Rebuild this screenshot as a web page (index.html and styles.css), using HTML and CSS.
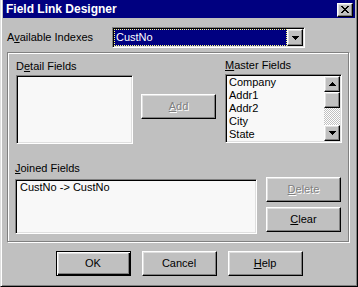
FILE: index.html
```html
<!DOCTYPE html>
<html lang="en">
<head>
    <meta charset="UTF-8">
    <meta name="viewport" content="width=device-width, initial-scale=1.0">
    <title>Field Link Designer</title>
    <link rel="stylesheet" href="styles.css">
</head>
<body>
    <div class="window">
        <div class="caption">
            <span class="caption-title">Field Link Designer</span>
            <span class="btn close-btn">
                <svg width="8" height="7" viewBox="0 0 8 7" shape-rendering="crispEdges"><path d="M0 0h2v1H0zM6 0h2v1H6zM1 1h2v1H1zM5 1h2v1H5zM2 2h4v1H2zM3 3h2v1H3zM2 4h4v1H2zM1 5h2v1H1zM5 5h2v1H5zM0 6h2v1H0zM6 6h2v1H6z"/></svg>
            </span>
        </div>
        <div class="dialog">
            <div class="index-row">
                <span class="index-label">A<u>v</u>ailable Indexes</span>
                <div class="combo">
                    <div class="combo-value">CustNo</div>
                    <div class="btn combo-arrow">
                        <svg width="7" height="4" viewBox="0 0 7 4" shape-rendering="crispEdges"><path d="M0 0h7v1H0zM1 1h5v1H1zM2 2h3v1H2zM3 3h1v1H3z"/></svg>
                    </div>
                </div>
            </div>

            <div class="group">
                <div class="group-top">
                    <div class="field-col">
                        <div class="field-label">D<u>e</u>tail Fields</div>
                        <div class="listbox detail-list"></div>
                    </div>
                    <div class="btn push disabled add-btn"><span><u>A</u>dd</span></div>
                    <div class="field-col master-col">
                        <div class="field-label"><u>M</u>aster Fields</div>
                        <div class="listbox master-list">
                            <div class="items">
                                <div>Company</div>
                                <div>Addr1</div>
                                <div>Addr2</div>
                                <div>City</div>
                                <div>State</div>
                            </div>
                            <div class="scrollbar">
                                <div class="btn scroll-btn">
                                    <svg width="7" height="4" viewBox="0 0 7 4" shape-rendering="crispEdges"><path d="M3 0h1v1H3zM2 1h3v1H2zM1 2h5v1H1zM0 3h7v1H0z"/></svg>
                                </div>
                                <div class="btn scroll-thumb"></div>
                                <div class="scroll-track"></div>
                                <div class="btn scroll-btn">
                                    <svg width="7" height="4" viewBox="0 0 7 4" shape-rendering="crispEdges"><path d="M0 0h7v1H0zM1 1h5v1H1zM2 2h3v1H2zM3 3h1v1H3z"/></svg>
                                </div>
                            </div>
                        </div>
                    </div>
                </div>

                <div class="group-bottom">
                    <div class="joined-col">
                        <div class="field-label joined-label"><u>J</u>oined Fields</div>
                        <div class="listbox joined-list">
                            <div class="items">
                                <div>CustNo -&gt; CustNo</div>
                            </div>
                        </div>
                    </div>
                    <div class="side-btns">
                        <div class="btn push disabled"><span><u>D</u>elete</span></div>
                        <div class="btn push"><span><u>C</u>lear</span></div>
                    </div>
                </div>
            </div>

            <div class="footer">
                <div class="btn push default-btn">OK</div>
                <div class="btn push">Cancel</div>
                <div class="btn push"><span><u>H</u>elp</span></div>
            </div>
        </div>
    </div>
</body>
</html>
```

FILE: styles.css
```css
body {
    margin: 0;
    background: #c0c0c0;
    font-family: "Liberation Sans", Arial, sans-serif;
    font-size: 11px;
    line-height: 13px;
    color: #000;
}
u {
    text-underline-offset: 1px;
}
.window {
    width: 358px;
    height: 287px;
    box-sizing: border-box;
    border-left: 1px solid #dfdfdf;
    border-right: 1px solid #000;
    border-bottom: 1px solid #000;
    box-shadow: inset 1px 0 #fff, inset -1px -1px #808080;
    padding: 0 2px 2px 2px;
    background: #c0c0c0;
}
.caption {
    display: flex;
    align-items: flex-start;
    height: 18px;
    background: #000080;
    color: #fff;
}
.caption-title {
    font-weight: bold;
    font-size: 12px;
    line-height: 18px;
    padding-left: 3px;
}

/* raised 3d button look */
.btn {
    box-sizing: border-box;
    display: flex;
    align-items: center;
    justify-content: center;
    background: #c0c0c0;
    border: 1px solid;
    border-color: #fff #000 #000 #fff;
    box-shadow: inset -1px -1px #808080, inset 1px 1px #dfdfdf;
}
.close-btn {
    width: 16px;
    height: 14px;
    margin: 3px 2px 0 auto;
}
.close-btn svg {
    margin: 0 1px 1px 0;
}
.push {
    width: 75px;
    height: 25px;
}
.disabled {
    color: #808080;
    text-shadow: 1px 1px #fff;
}
.default-btn {
    border: 1px solid #000;
    box-shadow: inset 1px 1px #fff, inset -1px -1px #000, inset -2px -2px #808080, inset 2px 2px #dfdfdf;
}

.dialog {
    padding: 9px 0 0 4px;
}
.index-row {
    display: flex;
    align-items: center;
    height: 21px;
}
.index-label {
    width: 105px;
}

/* sunken fields */
.combo, .listbox {
    box-sizing: border-box;
    border: 1px solid;
    border-color: #808080 #fff #fff #808080;
    box-shadow: inset 1px 1px #000, inset -1px -1px #dfdfdf;
    padding: 1px;
}
.combo {
    display: flex;
    width: 193px;
    height: 21px;
    background: #f8f8f8;
}
.combo-value {
    flex: 1;
    display: flex;
    align-items: center;
    background: #000080;
    color: #fff;
    border: 1px dotted #ffff80;
    padding-left: 1px;
}
.combo-arrow {
    width: 16px;
    height: 17px;
}

.group {
    width: 342px;
    height: 190px;
    box-sizing: border-box;
    margin-top: 4px;
    border: 1px solid #808080;
    box-shadow: inset 1px 1px #fff, 1px 1px #fff;
}
.group-top {
    display: flex;
    align-items: flex-start;
    padding: 7px 0 0 8px;
}
.field-col {
    width: 117px;
    display: flex;
    flex-direction: column;
}
.field-label {
    margin-bottom: 2px;
}
.listbox {
    background: #f8f8f8;
}
.detail-list {
    height: 69px;
}
.add-btn {
    margin: 34px 9px 0 8px;
}
.master-col {
    margin-top: -1px;
}
.master-list {
    display: flex;
    height: 69px;
}
.items {
    flex: 1;
    padding-left: 2px;
    overflow: hidden;
}
.scrollbar {
    width: 16px;
    display: flex;
    flex-direction: column;
}
.scroll-btn {
    height: 16px;
}
.scroll-thumb {
    height: 16px;
}
.scroll-track {
    flex: 1;
    background-image: conic-gradient(#fff 25%, #c0c0c0 0 50%, #fff 0 75%, #c0c0c0 0);
    background-size: 2px 2px;
}

.group-bottom {
    display: flex;
    align-items: flex-start;
    padding: 18px 0 0 7px;
}
.joined-col {
    width: 242px;
}
.joined-label {
    margin-bottom: 4px;
}
.joined-list {
    height: 55px;
}
.joined-list .items {
    padding-left: 3px;
}
.side-btns {
    display: flex;
    flex-direction: column;
    gap: 5px;
    margin: 15px 0 0 9px;
}

.footer {
    display: flex;
    justify-content: center;
    gap: 11px;
    margin: 9px 0 0 -4px;
}
```
